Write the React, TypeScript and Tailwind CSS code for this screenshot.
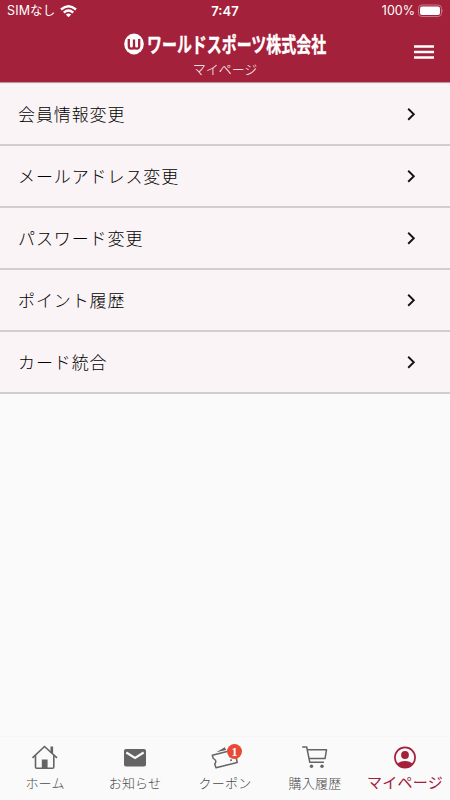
import React from 'react';

interface MenuRowProps {
  label: string;
}

function MenuRow({ label }: MenuRowProps) {
  return (
    <li className="flex h-[62px] items-center justify-between border-b-2 border-[#d2ced0] bg-[#faf4f6] pl-[18px] pr-[34px]">
      <span className="text-[17px] font-light leading-6 tracking-[0.9px] text-black">{label}</span>
      <svg className="h-[14px] w-[10px]" viewBox="0 0 10 14" fill="none" stroke="#181014" strokeWidth="1.9">
        <path d="M2.2 1.7L7.8 7.2L2.2 12.7" />
      </svg>
    </li>
  );
}

interface NavItemProps {
  label: string;
  icon: React.ReactNode;
  active?: boolean;
}

function NavItem({ label, icon, active }: NavItemProps) {
  return (
    <div className={`flex w-[90px] flex-col items-center pt-[7px] ${active ? 'text-[#a3213a]' : 'text-[#646464]'}`}>
      <div className="relative h-[28px] w-[28px]">{icon}</div>
      <span
        className={`whitespace-nowrap ${
          active ? 'text-[15px] leading-[20px] tracking-[0.3px]' : 'pt-px text-[13px] font-light leading-[20px] tracking-[0.2px] text-[#4a4a4a]'
        }`}
      >
        {label}
      </span>
    </div>
  );
}

const rows = ['会員情報変更', 'メールアドレス変更', 'パスワード変更', 'ポイント履歴', 'カード統合'];

function HomeIcon() {
  return (
    <svg className="h-[28px] w-[28px]" viewBox="0 0 28 28" fill="none" stroke="currentColor" strokeWidth="1.6">
      <path d="M1.5 13.8L13.5 2.5L26 13.8" />
      <path d="M4.5 11.5V23q0 1.3 1.3 1.3H21.5q1.3 0 1.3-1.3V11.5" />
      <path d="M20.8 9V2.5" strokeWidth="2.6" />
      <path d="M10.8 24.5v-9h5.8v9z" fill="currentColor" stroke="none" />
    </svg>
  );
}

function MailIcon() {
  return (
    <svg className="h-[28px] w-[28px]" viewBox="0 0 28 28">
      <rect x="3" y="5" width="22" height="17.4" rx="2" fill="currentColor" />
      <path d="M5.3 8.5L14 14L22.7 8.5" fill="none" stroke="#fafafa" strokeWidth="2.2" />
    </svg>
  );
}

function CouponIcon() {
  return (
    <>
      <svg className="h-[28px] w-[28px]" viewBox="0 0 28 28" fill="none" stroke="currentColor" strokeWidth="1.5">
        <path d="M5.2 8.3L13.8 3.2L15.2 6Z" fill="currentColor" stroke="none" />
        <path d="M1.3 11.3L22 6L23.2 9.2Q21.8 12 25.3 14L26.2 18.5L5 23.8L3.7 20Q6.5 16.5 2.2 14.3Z" strokeLinejoin="round" />
        <path d="M18.8 11.5L20.8 19" strokeWidth="1.8" strokeDasharray="1.8 2.2" />
      </svg>
      <span className="absolute left-[16px] top-0 flex h-[15px] w-[15px] items-center justify-center rounded-full bg-[#e84a37] font-['Liberation_Serif',serif] text-[12px] font-bold leading-none text-white">
        1
      </span>
    </>
  );
}

function CartIcon() {
  return (
    <svg className="h-[28px] w-[28px]" viewBox="0 0 28 28" fill="none" stroke="currentColor" strokeWidth="1.5">
      <path d="M1.2 3H5.7L8.8 18.3H22.9" strokeLinejoin="round" />
      <path d="M6.3 5.8H25.5L24 14.6H8.1" strokeLinejoin="round" />
      <circle cx="10.5" cy="22.3" r="1.7" fill="currentColor" stroke="none" />
      <circle cx="21" cy="22.3" r="1.7" fill="currentColor" stroke="none" />
    </svg>
  );
}

function AccountIcon() {
  return (
    <svg className="h-[28px] w-[28px]" viewBox="0 0 28 28">
      <circle cx="14" cy="13.5" r="10.1" fill="none" stroke="currentColor" strokeWidth="1.7" />
      <circle cx="14" cy="11" r="3.9" fill="currentColor" />
      <path d="M6.2 20Q9 17 14 17T21.8 20Q18.8 23.7 14 23.7T6.2 20Z" fill="currentColor" />
    </svg>
  );
}

function App() {
  return (
    <div className="flex h-[800px] w-[450px] flex-col overflow-hidden bg-[#fafafa] font-['Noto_Sans_CJK_JP',sans-serif]">
      <header className="h-[83px] shrink-0 border-b border-[#b99a9c] bg-[#a3213a] text-white">
        {/* Status bar */}
        <div className="grid h-[23px] grid-cols-3 items-center px-[7px] font-['Inter','Noto_Sans_CJK_JP',sans-serif] text-[12.5px] leading-none">
          <div className="flex items-center gap-[5px]">
            <span className="whitespace-nowrap tracking-[0.15px]">SIMなし</span>
            <svg className="h-[13px] w-[17px]" viewBox="0 0 17 13" fill="none" stroke="white" strokeWidth="2.4">
              <path d="M1 4.5Q8.5 -2 16 4.5" />
              <path d="M3.8 7.6Q8.5 3.5 13.2 7.6" />
              <path d="M8.5 12.3L5.8 9.6Q8.5 7.5 11.2 9.6Z" fill="white" stroke="none" />
            </svg>
          </div>
          <span className="text-center text-[13px] font-semibold">7:47</span>
          <div className="flex items-center justify-end gap-[3px]">
            <span>100%</span>
            <svg className="-mr-[2px] mb-px h-[14px] w-[27px]" viewBox="0 0 27 14">
              <rect x="0.5" y="1" width="23" height="11.5" rx="3.3" fill="none" stroke="#c8788a" />
              <rect x="2" y="2.5" width="20" height="8.5" rx="2" fill="white" />
              <path d="M24.5 5q1.5 1.7 0 3.5z" fill="#c8788a" />
            </svg>
          </div>
        </div>
        {/* Logo, page title and menu button */}
        <div className="grid h-[59px] grid-cols-[40px_1fr_40px]">
          <span />
          <div className="flex flex-col items-center pt-[8px]">
            <div className="flex h-[26px] items-center gap-[3px]">
              <svg className="h-[26px] w-[20px]" viewBox="0 0 20 26">
                <ellipse cx="10" cy="13" rx="9.8" ry="10.4" fill="white" />
                <path d="M4.8 8v7q0 2.7 2.6 2.7T10 15V8.5M10 15q0 2.7 2.6 2.7T15.2 15V8" fill="none" stroke="#a3213a" strokeWidth="2.3" />
              </svg>
              <div className="w-[180px] pb-[2px]">
                <div className="w-[252px] origin-left scale-x-[0.712] whitespace-nowrap text-[21px] font-bold leading-[30px] [-webkit-text-stroke:0.4px_white]">
                  ワールドスポーツ株式会社
                </div>
              </div>
            </div>
            <span className="pt-[3px] text-[13px] font-light leading-[18px]">マイページ</span>
          </div>
          <svg className="ml-[4px] mt-[22px] h-[15px] w-[20px]" viewBox="0 0 20 15" stroke="white" strokeWidth="2.5">
            <path d="M0 1.5h20M0 7h20M0 12.5h20" />
          </svg>
        </div>
      </header>

      <ul className="grow">
        <li className="h-px bg-[#f3e9eb]" />
        {rows.map((label) => (
          <MenuRow key={label} label={label} />
        ))}
      </ul>

      <nav className="flex h-[64px] shrink-0 border-t border-[#f5f5f5]">
        <NavItem label="ホーム" icon={<HomeIcon />} />
        <NavItem label="お知らせ" icon={<MailIcon />} />
        <NavItem label="クーポン" icon={<CouponIcon />} />
        <NavItem label="購入履歴" icon={<CartIcon />} />
        <NavItem label="マイページ" icon={<AccountIcon />} active />
      </nav>
    </div>
  );
}

export default App;
